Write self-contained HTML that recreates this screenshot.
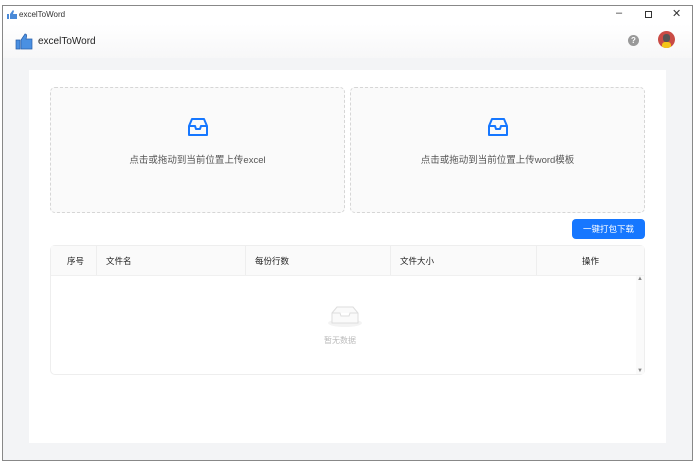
<!DOCTYPE html><html><head><meta charset="utf-8"><style>
*{margin:0;padding:0;box-sizing:border-box}
body{width:696px;height:463px;background:#fff;font-family:"Liberation Sans","Noto Sans CJK SC",sans-serif;position:relative;overflow:hidden;font-size:9px;color:#333}
.win{position:absolute;left:2px;top:5px;width:691px;height:456px;border:1px solid #888;background:#f3f4f6}
.tb{position:absolute;left:0;top:0;width:100%;height:18px;background:#fff;font-size:8px}
.hd{position:absolute;left:0;top:18px;width:100%;height:34px;background:linear-gradient(#fff,#f7f7f8)}
.card{position:absolute;left:29px;top:70px;width:637px;height:373px;background:#fff}
.up{position:absolute;top:82px;width:295px;height:126px;border:1px dashed #d6d6d6;border-radius:5px;background:#fafafa;text-align:center;font-size:9.5px;color:#555}
.up svg{display:block;margin:29px auto 15px}
.btn{position:absolute;left:569px;top:215px;width:73px;height:20px;background:#1677ff;border-radius:4px;color:#fff;font-size:8.5px;text-align:center;line-height:20px}
.tbl{position:absolute;left:48px;top:241px;width:595px;height:130px;border:1px solid #eee;border-radius:5px}
.th{height:30px;background:#fafafa;display:flex;font-size:8.5px;color:#222;border-bottom:1px solid #f0f0f0}
.th div{line-height:30px;padding-left:9px;border-right:1px solid #eee}
</style></head><body>
<div class="win">
<div class="tb"><svg style="position:absolute;left:4px;top:4px" width="10" height="9"><path d="M0 4h2v5H0zM3 4l3-4 1 1-1 3h4v5H3z" fill="#4a8ad8"/></svg><span style="position:absolute;left:16px;top:4px">excelToWord</span>
<span style="position:absolute;left:613px;top:1px;font-size:11px">–</span><span style="position:absolute;left:642px;top:5px;width:7px;height:7px;border:1px solid #333"></span><span style="position:absolute;left:669px;top:1px;font-size:11px">✕</span></div>
<div class="hd"><svg style="position:absolute;left:12px;top:8px" width="18" height="18"><path d="M1 8h4v9H1zM6 8l4-6c2 0 2 2 1 5h6v10H6z" fill="#4a90e2" stroke="#2a5fa8" stroke-width=".7"/></svg><span style="position:absolute;left:35px;top:12px;font-size:10px;color:#222">excelToWord</span>
<span style="position:absolute;left:625px;top:11px;width:11px;height:11px;border-radius:50%;background:#999;color:#fff;font-size:8px;text-align:center;line-height:11px;font-weight:bold">?</span>
<span style="position:absolute;left:655px;top:7px;width:17px;height:17px;border-radius:50%;background:#c94b45;overflow:hidden"><span style="position:absolute;left:4px;top:11px;width:9px;height:8px;background:#f5c518;border-radius:3px"></span><span style="position:absolute;left:5px;top:3px;width:7px;height:8px;background:#555;border-radius:3px"></span></span></div>
</div>
<div class="card"></div>
<div class="up" style="left:50px;top:87px"><svg width="22" height="20" viewBox="0 0 22 20"><path d="M2 9l3-7h12l3 7v9H2zM2 9h6l1 3h4l1-3h6" fill="none" stroke="#1677ff" stroke-width="2" stroke-linejoin="round"/></svg>点击或拖动到当前位置上传excel</div>
<div class="up" style="left:350px;top:87px"><svg width="22" height="20" viewBox="0 0 22 20"><path d="M2 9l3-7h12l3 7v9H2zM2 9h6l1 3h4l1-3h6" fill="none" stroke="#1677ff" stroke-width="2" stroke-linejoin="round"/></svg>点击或拖动到当前位置上传word模板</div>
<div class="btn" style="left:572px;top:219px">一键打包下载</div>
<div class="tbl" style="left:50px;top:245px;width:595px">
<div class="th"><div style="width:46px;padding-left:16px">序号</div><div style="width:149px">文件名</div><div style="width:145px">每份行数</div><div style="width:146px">文件大小</div><div style="flex:1;border:0;text-align:center;padding:0">操作</div></div>
<svg style="position:absolute;left:276px;top:58px" width="36" height="24"><ellipse cx="18" cy="19" rx="17" ry="4" fill="#f3f3f3"/><path d="M5 9l5-6h16l5 6v10H5zM5 9h8l1 3h8l1-3h8" fill="#fafafa" stroke="#ddd"/></svg>
<div style="position:absolute;left:273px;top:89px;font-size:8px;color:#bbb">暂无数据</div>
<div style="position:absolute;right:0;top:30px;width:8px;height:98px;background:#fafafa;font-size:6px;color:#888;text-align:center">▲<div style="position:absolute;bottom:0;width:8px">▼</div></div>
</div>
</body></html>
